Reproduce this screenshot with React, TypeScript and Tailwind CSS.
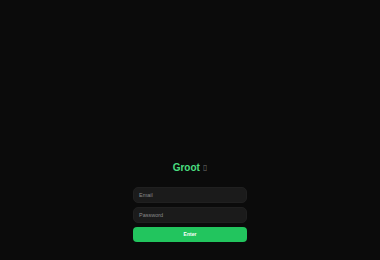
import React from "react";

export default function App() {
  return (
    <div className="w-[380px] h-[260px] bg-[#0b0b0b] flex flex-col items-center pt-[162px]" style={{ fontFamily: '"Liberation Sans", Arial, sans-serif' }}>
      <div className="text-[10px] font-bold text-[#4ade80] leading-[12px] h-[12px] flex items-center">
        <span>Groot</span>
        <span className="ml-[3px] text-[8px] font-normal text-[#6b6b6b]" style={{ fontFamily: '"DejaVu Sans", sans-serif' }}>▯</span>
      </div>
      <div className="mt-[13px] w-[114px] flex flex-col gap-[4px]">
        <div className="h-[16px] rounded-[5px] bg-[#1b1b1b] border border-[#202020] flex items-center px-[5px] text-[5.5px] text-[#8a8a8a]">Email</div>
        <div className="h-[16px] rounded-[5px] bg-[#1b1b1b] border border-[#202020] flex items-center px-[5px] text-[5.5px] text-[#8a8a8a]">Password</div>
        <div className="h-[15px] rounded-[4px] bg-[#22c55e] flex items-center justify-center text-[5px] font-bold text-white">Enter</div>
      </div>
    </div>
  );
}
